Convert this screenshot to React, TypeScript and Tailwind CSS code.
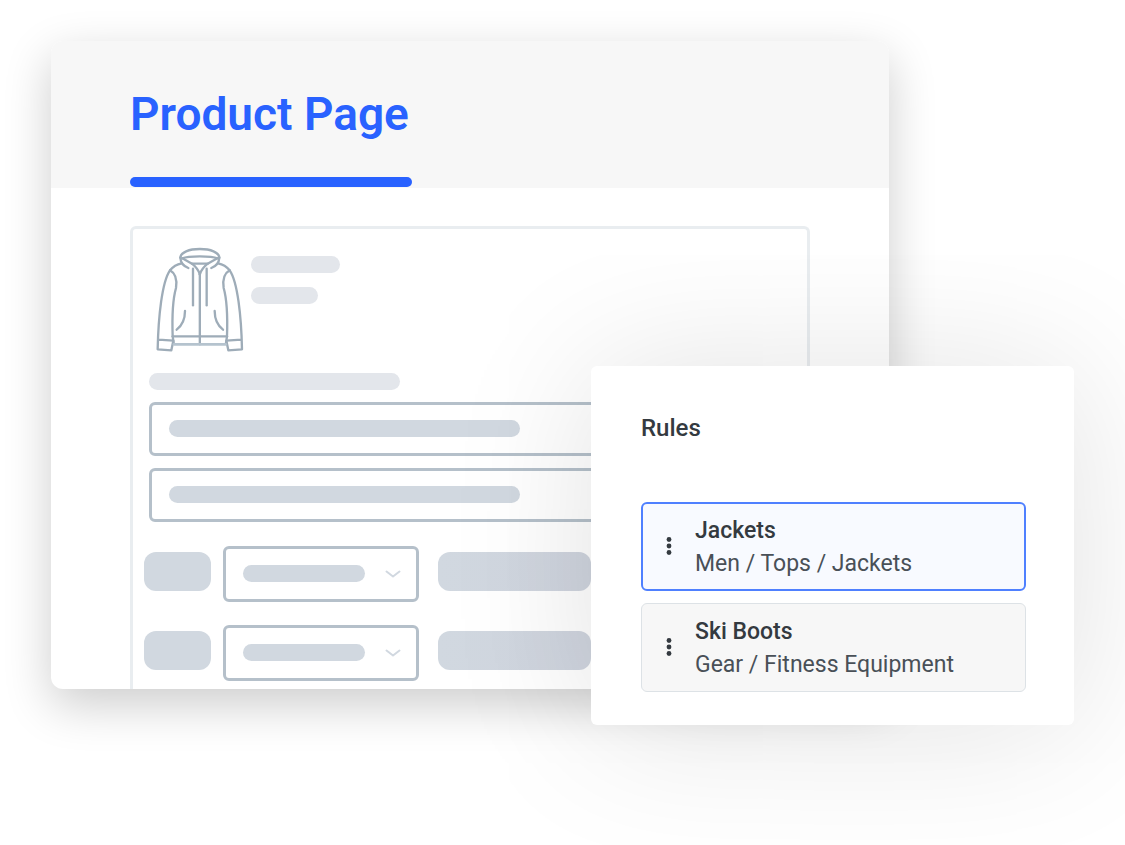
import clsx from "clsx";

const rules = [
  { name: "Jackets", path: "Men / Tops / Jackets", active: true },
  { name: "Ski Boots", path: "Gear / Fitness Equipment", active: false },
];

function HoodieSide() {
  return (
    <>
      <path d="M176 143C162 138 153 127 152 112" />
      <path d="M158 114L187 130C197 138 206 148 210.500 162" />
      <path d="M190 145V255" />
      <path d="M156 129C141 132 129 140 121 150C97 184 86 290 84 387L125 390L131 361L86 358" />
      <path d="M121 150C139 160 142 183 139 203C127 245 127 290 129 348L132 368" />
      <path d="M166 272C166 295 158 315 141 328" />
    </>
  );
}

function Hoodie() {
  return (
    <svg aria-hidden="true" className="h-[105px] w-[87px] shrink-0" viewBox="79 80 261 315" fill="none" stroke="#9eacb8" strokeWidth="7" strokeLinecap="round" strokeLinejoin="round" overflow="visible">
      <HoodieSide />
      <g transform="translate(421 0) scale(-1 1)"><HoodieSide /></g>
      <path d="M152 112C153 96 178 86 210.500 86C243 86 268 96 269 112" />
      <path d="M158 114C176 106 245 106 263 114" />
      <path d="M187 130H234" />
      <path d="M210.500 162V372" />
      <path d="M129 348H292" />
      <path d="M133 372H288" stroke="#b5c3ce" strokeWidth="8" />
    </svg>
  );
}

function Bar({ className }: { className?: string }) {
  return <span className={clsx("block h-[17px] rounded-full", className)} />;
}

function TextField({ label }: { label: string }) {
  return (
    <div className="relative">
      <input aria-label={label} type="text" className="block h-[54px] w-full rounded-md border-3 border-[#b5c0ca] bg-transparent px-4 outline-none" />
      <Bar className="pointer-events-none absolute top-[18px] left-5 w-[351px] bg-[#d1d8e0]" />
    </div>
  );
}

function OptionRow({ label }: { label: string }) {
  return (
    <div className="flex items-start">
      <span className="mt-1.5 h-[39px] w-[67px] shrink-0 rounded-xl bg-[#d1d8e0]" />
      <div className="relative ml-3 w-[196px] shrink-0">
        <select aria-label={label} className="block h-14 w-full appearance-none rounded-md border-3 border-[#b5c0ca] bg-transparent outline-none" />
        <Bar className="pointer-events-none absolute top-[19px] left-5 w-[122px] bg-[#d1d8e0]" />
        <svg aria-hidden="true" className="pointer-events-none absolute top-6 right-[18px] h-2 w-4" viewBox="0 0 16 8" fill="none" stroke="#d1d8e0" strokeWidth="2" strokeLinecap="round" strokeLinejoin="round">
          <path d="M1.500 1.500L8 6.500L14.500 1.500" />
        </svg>
      </div>
      <span className="mt-1.5 ml-[19px] h-[39px] w-[153px] shrink-0 rounded-xl bg-linear-to-r from-[#d1d8e0] to-[#d0d5df]" />
    </div>
  );
}

function ProductPage() {
  return (
    <section className="overflow-hidden rounded-xl bg-white shadow-[0_16px_48px_rgba(0,0,0,0.2)]">
      <header className="flex h-[147px] items-end bg-[#f7f7f7] px-[79px] pb-px">
        <h1 className="flex flex-col gap-[34px] text-[46px] leading-[58px] font-semibold whitespace-nowrap text-[#2962ff]">
          Product Page
          <span className="h-2.5 w-[282px] rounded-full bg-[#2962ff]" />
        </h1>
      </header>
      <div className="px-[79px] pt-[38px]">
        <div className="rounded-t-md border-3 border-b-0 border-[#e9edf0] pt-[18px] pb-2">
          <div className="flex gap-2 pl-[23px]">
            <Hoodie />
            <div className="flex flex-col gap-3.5 pt-[9px]">
              <Bar className="w-[89px] bg-[#e3e6eb]" />
              <Bar className="w-[67px] bg-[#e3e6eb]" />
            </div>
          </div>
          <div className="flex flex-col gap-3 px-4 pt-[21px]">
            <Bar className="w-[251px] bg-[#e3e6eb]" />
            <TextField label="Product name" />
            <TextField label="Product description" />
          </div>
          <div className="flex flex-col gap-[23px] px-[11px] pt-6">
            <OptionRow label="Size" />
            <OptionRow label="Color" />
          </div>
        </div>
      </div>
    </section>
  );
}

function RulesPanel() {
  return (
    <aside className="absolute top-[366px] right-[51px] w-[483px] rounded-md bg-white pt-[46px] pr-12 pb-[33px] pl-[50px] shadow-[0_4px_150px_rgba(0,0,0,0.12)]">
      <h2 className="text-2xl leading-8 font-medium">Rules</h2>
      <ul className="mt-[58px] flex flex-col gap-3">
        {rules.map((rule) => (
          <li key={rule.name} className={clsx("flex h-[89px] items-center rounded-md", rule.active ? "border-2 border-[#4f80ff] bg-[#f8faff] pr-px" : "border border-[#dde2e6] bg-[#f7f7f7] px-px")}>
            <button type="button" aria-label={`Move ${rule.name}`} className="flex h-full w-[52px] items-center justify-center pb-0.5">
              <svg aria-hidden="true" className="h-[18px] w-1.5" viewBox="0 0 6 18" fill="#343a40">
                <circle cx="3" cy="2.500" r="2.400" />
                <circle cx="3" cy="9" r="2.400" />
                <circle cx="3" cy="15.500" r="2.400" />
              </svg>
            </button>
            <div className="text-[23px] leading-[33px] whitespace-nowrap">
              <p className="font-medium">{rule.name}</p>
              <p className="text-[#495057]">{rule.path}</p>
            </div>
          </li>
        ))}
      </ul>
    </aside>
  );
}

export default function App() {
  return (
    <main className="relative min-h-screen overflow-hidden bg-white pt-[41px] pr-[236px] pb-[156px] pl-[51px] font-[Roboto,'Liberation_Sans',sans-serif] text-[#343a40]">
      <ProductPage />
      <RulesPanel />
    </main>
  );
}
